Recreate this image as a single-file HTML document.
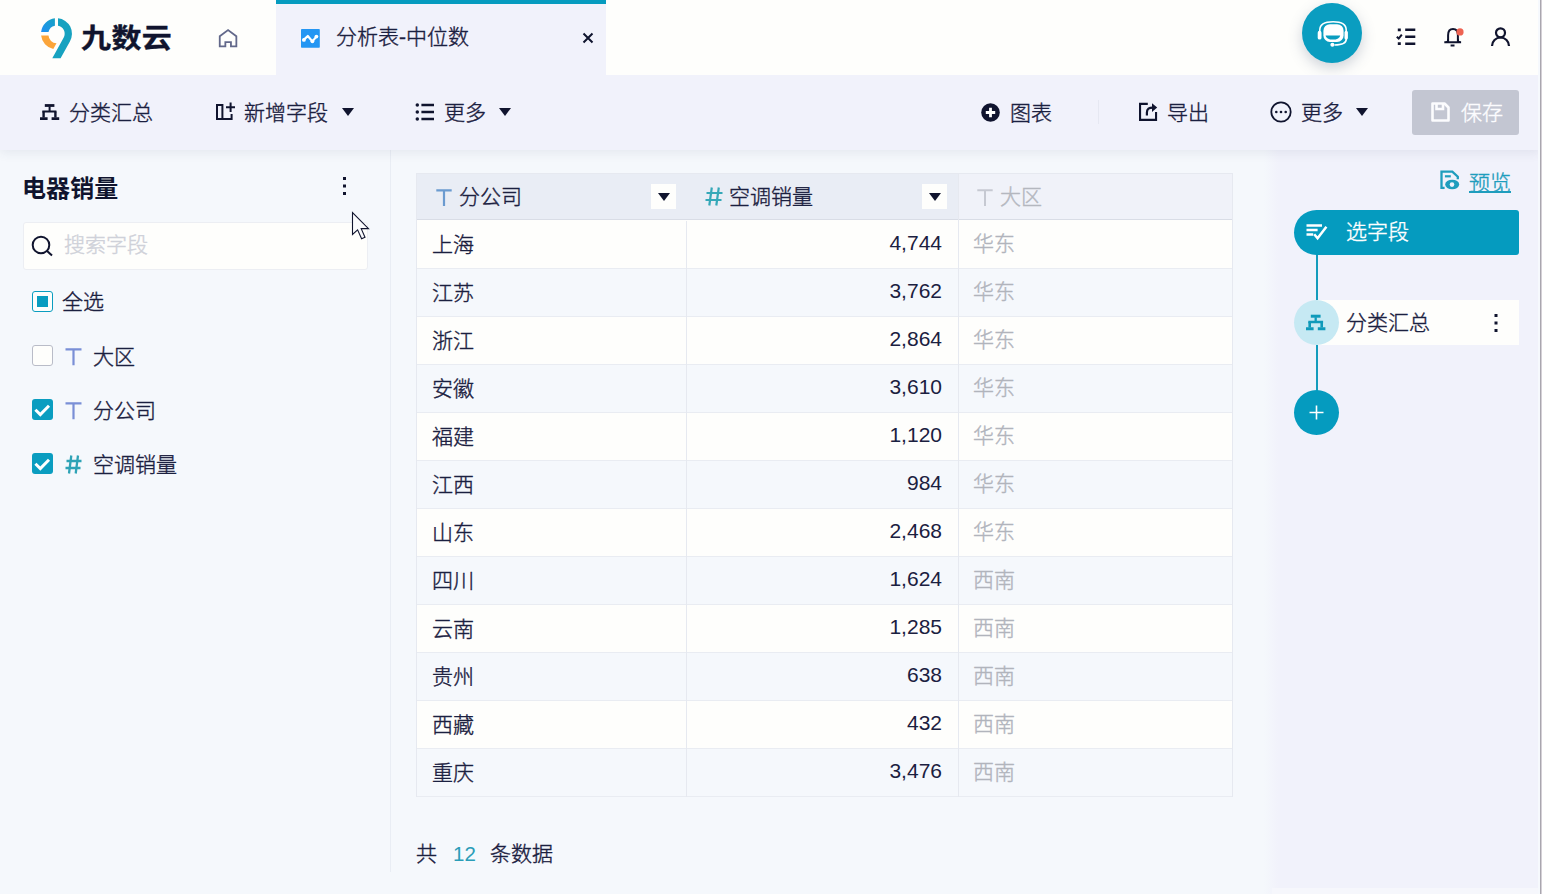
<!DOCTYPE html>
<html lang="zh-CN">
<head>
<meta charset="utf-8">
<title>分析表-中位数</title>
<style>
*{box-sizing:border-box;margin:0;padding:0}
html,body{width:1542px;height:894px;overflow:hidden}
body{position:relative;background:#f5f8fc;font-family:"Liberation Sans","Noto Sans CJK SC",sans-serif;font-size:21px;color:#1a1f3d;}
.abs{position:absolute}
.t{font-weight:300;-webkit-text-stroke:0.4px currentColor;position:absolute;white-space:nowrap;line-height:30px;height:30px;font-size:21px;color:#1b2040}
svg{position:absolute;overflow:visible}

/* top bar */
#top{left:0;top:0;width:1540px;height:75px;background:#fefefc}
#tab{left:276px;top:0;width:330px;height:75px;background:#f1f2fb;border-top:4px solid #059bbf}
/* toolbar */
#bar{left:0;top:75px;width:1540px;height:75px;background:#f1f2fb;box-shadow:0 3px 10px rgba(60,70,110,.085);clip-path:inset(0 0 -20px 0);z-index:5}
#save{left:1412px;top:90px;width:107px;height:45px;background:#c3c6d2;border-radius:3px}
/* panels */
#left{left:0;top:150px;width:391px;height:722px;background:#f5f8fc;border-right:1px solid #e9edf4}
#right{left:1264px;top:150px;width:276px;height:744px;background:linear-gradient(to right,rgba(241,242,251,0) 0,#f1f2fb 14px,#f1f2fb 100%)}
#edge{left:1538px;top:0;width:4px;height:894px;background:linear-gradient(to right,#f6f9fd 0,#f6f9fd 2px,#a9a6af 2px,#a9a6af 3px,#d4d0d6 3px,#d4d0d6 4px);z-index:30}
#search{left:23px;top:222px;width:345px;height:48px;background:#fefefc;border:1px solid #eceef3;border-radius:3px}
.cb{position:absolute;width:21px;height:21px;border-radius:3px}
.cb.on{background:#0a9dc0}
.cb.off{background:#fefefc;border:1.5px solid #b9bcc8}
.cb.half{background:#fefefc;border:1.5px solid #0a9dc0}
.cb.half:after{content:"";position:absolute;left:3.5px;top:3.5px;width:11px;height:11px;background:#0a9dc0}

/* table */
#tbl{left:416px;top:173px;width:817px;height:624px;border:1px solid #e6e9f0;background:#fefefc}
#th{left:417px;top:174px;width:815px;height:46px;background:#e9edf5;border-bottom:1px solid #d9dde6}
.row{position:absolute;left:417px;width:815px;height:48px;border-bottom:1px solid #e9ecf2}
.row.odd{background:#fefefc}
.row.even{background:#f5f8fc}
.row span{font-weight:300;-webkit-text-stroke:0.4px currentColor;position:absolute;top:9px;line-height:30px;font-size:21px;white-space:nowrap}
.row .c1{left:15px;color:#1b2040}
.row .c2{right:290px;top:7px;font-weight:400;-webkit-text-stroke:0;color:#1b2040;font-size:21px}
.row .c3{left:556px;top:8px;color:#b1b4bc}
.vl{position:absolute;width:1px;background:#e6e9f0;top:173px;height:624px}
.dd{position:absolute;width:25px;height:25px;background:#fefefc}
.dd:after{content:"";position:absolute;left:6.5px;top:8.5px;border-left:6px solid transparent;border-right:6px solid transparent;border-top:8px solid #10142e}
.caret{position:absolute;width:0;height:0;border-left:6px solid transparent;border-right:6px solid transparent;border-top:8px solid #10142e}
</style>
</head>
<body>
<div id="top" class="abs"></div>
<div id="tab" class="abs"></div>
<div id="bar" class="abs"></div>
<div id="left" class="abs"></div>
<div id="right" class="abs"></div>
<div id="edge" class="abs"></div>
<div class="abs" style="left:1272px;top:888px;width:268px;height:6px;background:#f6f7fc"></div>

<!-- LOGO -->
<svg style="left:36px;top:14px" width="40" height="48" viewBox="0 0 40 48">
  <defs><linearGradient id="lg1" x1="0" y1="1" x2="1" y2="0"><stop offset="0" stop-color="#1e8ff5"/><stop offset="0.550" stop-color="#1b9ad8"/><stop offset="1" stop-color="#17a2c2"/></linearGradient></defs>
  <path d="M18.900 4.280 A15.500 15.500 0 0 0 5.100 17.900 L12.500 17.900 A8.200 8.200 0 0 1 18.900 11.660 Z" fill="url(#lg1)"/>
  <path d="M5.100 21.500 A15.500 15.500 0 0 0 17.300 35 L20.500 29.300 A8.400 8.400 0 0 1 12.500 21.500 Z" fill="#fba53a"/>
  <path d="M22 4.280 A15.500 15.500 0 0 1 33.900 27.450 L24.600 44.300 H16.300 L27.600 23.800 A8.200 8.200 0 0 0 22 11.660 Z" fill="#17a2c0"/>
</svg>
<div class="t" style="left:81px;top:20px;font-size:30px;line-height:36px;height:36px;font-weight:700;color:#10142e;letter-spacing:0.400px;-webkit-text-stroke:0.400px #10142e;transform:scaleY(0.920);transform-origin:50% 88%">九数云</div>
<svg style="left:217px;top:27px" width="22" height="22" viewBox="0 0 22 22" fill="none" stroke="#62688a" stroke-width="1.800">
  <path d="M2.750 9.300 L11.050 3.100 L19.350 9.300 V19.350 H13.950 V15.100 H8.350 V19.350 H2.750 Z" stroke-linejoin="miter"/>
</svg>
<svg style="left:301px;top:28.700px" width="19" height="19" viewBox="0 0 19 19">
  <rect width="18.800" height="18.800" rx="0.800" fill="#2496f3"/>
  <path d="M2.700 10.900 L6.800 7 L11.400 12.400 L15.400 7.600" fill="none" stroke="#fff" stroke-width="2.200" stroke-linecap="round" stroke-linejoin="round"/>
  <circle cx="2.900" cy="10.900" r="1.900" fill="#fff"/><circle cx="11.400" cy="12.300" r="1.900" fill="#fff"/><circle cx="15.400" cy="7.600" r="1.900" fill="#fff"/>
</svg>
<div class="t" style="left:336px;top:22px">分析表-中位数</div>
<svg style="left:582px;top:32px" width="12" height="12" viewBox="0 0 12 12" stroke="#10142e" stroke-width="2" fill="none"><path d="M1.5 1.5 L10.5 10.5 M10.5 1.5 L1.5 10.5"/></svg>

<div class="abs" style="left:1302px;top:3px;width:60px;height:60px;border-radius:50%;background:#0a9dc0;box-shadow:0 5px 14px rgba(70,85,120,.26)"></div>
<svg style="left:1302px;top:3px" width="60" height="60" viewBox="0 0 60 60" fill="none" stroke="#fff" stroke-width="1.600">
  <path d="M17.800 30 V27 C17.800 21.500 22.500 18.800 31.200 18.800 C39.900 18.800 44.200 21.500 44.200 27 V30"/>
  <rect x="21.400" y="21.200" width="20.200" height="17.800" rx="6.500" fill="#fff" stroke="none"/>
  <path d="M23.600 32.600 H38.200 A7.300 4 0 0 1 23.600 32.600Z" fill="#0a9dc0" stroke="none"/>
  <rect x="15.700" y="27.800" width="3.800" height="8.800" rx="1.900" fill="#fff" stroke="none"/>
  <rect x="42.500" y="27.800" width="3.400" height="8.800" rx="1.700" fill="#fff" stroke="none"/>
  <path d="M44.300 36 C44.300 40.800 38.500 42 32.500 42" stroke-width="1.600"/>
  <circle cx="30.400" cy="41.700" r="2.050" fill="#fff" stroke="none"/>
</svg>

<svg style="left:1396px;top:27px" width="22" height="22" viewBox="0 0 22 22" fill="none" stroke="#10142e" stroke-width="2.600">
  <path d="M9.200 2.800 H19.300 M9.200 9.800 H19.300 M9.200 16.700 H19.300"/>
  <path d="M1.800 2.800 H4.800 M1.800 16.700 H4.800" stroke-width="2.800"/>
  <path d="M0.800 9.800 L2.700 11.600 L5.800 7.600" stroke-width="2"/>
</svg>
<svg style="left:1442px;top:26px" width="24" height="24" viewBox="0 0 24 24" fill="none" stroke="#10142e" stroke-width="2">
  <path d="M2.300 16.300 H19.100 M6.100 16.300 V9.200 C6.100 5.500 8 3 11 3 C14 3 15.900 5.500 15.900 9.200 V16.300 M8.600 19.500 H12.500"/>
  <path d="M6.100 13 C6.100 14.500 5 16.300 3.500 16.300 M15.900 13 C15.900 14.500 17 16.300 18.500 16.300" stroke-width="1.600"/>
  <circle cx="18" cy="5.900" r="3.600" fill="#ee6352" stroke="none"/>
</svg>
<svg style="left:1490px;top:26px" width="22" height="22" viewBox="0 0 22 22" fill="none" stroke="#10142e" stroke-width="2.200">
  <circle cx="10.500" cy="6.800" r="4.500"/>
  <path d="M2 20 A8.500 8.500 0 0 1 19 20"/>
</svg>
<!-- TOOLBAR -->
<div class="abs" style="left:0;top:0;z-index:6">
<svg style="left:40px;top:103px" width="20" height="18" viewBox="0 0 20 18" fill="none" stroke="#10142e">
  <path d="M4.800 2.500 H14.400" stroke-width="2.800"/>
  <path d="M9.600 3.500 V8.600 M2.300 8.600 H16.400" stroke-width="2"/>
  <path d="M3.600 8.600 V14.500 M15.400 8.600 V14.500" stroke-width="2.400"/>
  <path d="M0 15.600 H7.600 M11.600 15.600 H19.200" stroke-width="2.800"/>
</svg>
<div class="t" style="left:69px;top:98px">分类汇总</div>

<svg style="left:215px;top:102px" width="22" height="20" viewBox="0 0 22 20" fill="none" stroke="#10142e" stroke-width="2">
  <rect x="2" y="3" width="5.400" height="14"/>
  <path d="M7 17 H16.600 V12"/>
  <path d="M11 5.200 H20 M15.600 0.600 V10"/>
</svg>
<div class="t" style="left:244px;top:98px">新增字段</div>
<div class="caret" style="left:342px;top:108px"></div>

<svg style="left:415px;top:103px" width="19" height="18" viewBox="0 0 19 18" fill="none" stroke="#10142e" stroke-width="2.400">
  <path d="M6.400 2 H19 M6.400 9 H19 M6.400 16 H19"/>
  <g fill="#10142e" stroke="none"><circle cx="2.300" cy="2" r="1.750"/><circle cx="2.300" cy="9" r="1.750"/><circle cx="2.300" cy="16" r="1.750"/></g>
</svg>
<div class="t" style="left:444px;top:98px">更多</div>
<div class="caret" style="left:499px;top:108px"></div>

<svg style="left:981px;top:103px" width="19" height="19" viewBox="0 0 19 19">
  <circle cx="9.500" cy="9.500" r="9.300" fill="#10142e"/>
  <path d="M9.500 4.800 V14.200 M4.800 9.500 H14.200" stroke="#fff" stroke-width="2.800" fill="none"/>
</svg>
<div class="t" style="left:1010px;top:98px">图表</div>
<div class="abs" style="left:1098px;top:100px;width:1px;height:24px;background:#e6e8f2"></div>

<svg style="left:1139px;top:102px" width="20" height="20" viewBox="0 0 20 20" fill="none" stroke="#10142e" stroke-width="2.100">
  <path d="M8.800 1.900 H1.050 V17.850 H17.050 V10"/>
  <path d="M7.900 13.400 V10.500 C7.900 7 10 5.600 14 5.600" stroke-width="2.200"/>
  <path d="M13 1.200 L18.200 5.600 L13 10 Z" fill="#10142e" stroke="none"/>
</svg>
<div class="t" style="left:1167px;top:98px">导出</div>

<svg style="left:1270px;top:101px" width="22" height="22" viewBox="0 0 22 22">
  <circle cx="11" cy="11" r="9.700" fill="none" stroke="#10142e" stroke-width="1.800"/>
  <circle cx="6.300" cy="11" r="1.300" fill="#10142e"/><circle cx="11" cy="11" r="1.300" fill="#10142e"/><circle cx="15.700" cy="11" r="1.300" fill="#10142e"/>
</svg>
<div class="t" style="left:1301px;top:98px">更多</div>
<div class="caret" style="left:1356px;top:108px"></div>

<div id="save" class="abs"></div>
<svg style="left:1431px;top:102px" width="19" height="20" viewBox="0 0 19 20" fill="none" stroke="#fcfcfe" stroke-width="2.600">
  <path d="M1.500 1.500 H13.500 L17.500 5.500 V18.500 H1.500 Z" stroke-linejoin="round"/>
  <path d="M5.500 1.500 V7 H12 V1.500" />
</svg>
<div class="t" style="left:1461px;top:98px;color:#fcfcfe">保存</div>
</div>
<!-- LEFTPANEL -->
<div class="t" style="left:22px;top:173px;font-size:24px;font-weight:700;-webkit-text-stroke:0;line-height:32px;height:32px;color:#10142e;letter-spacing:0.100px">电器销量</div>
<svg style="left:343px;top:177px" width="3" height="18" viewBox="0 0 3 18" fill="#10142e"><rect x="0" y="0" width="3" height="3"/><rect x="0" y="7.500" width="3" height="3"/><rect x="0" y="15" width="3" height="3"/></svg>
<div id="search" class="abs"></div>
<svg style="left:31px;top:235px" width="22" height="22" viewBox="0 0 22 22" fill="none" stroke="#10142e" stroke-width="2"><circle cx="10" cy="10" r="8.300"/><path d="M15.800 15.800 L21 20.600"/></svg>
<div class="t" style="left:64px;top:230px;color:#cfd1d9">搜索字段</div>

<div class="cb half" style="left:32px;top:291px"></div>
<div class="t" style="left:62px;top:287px">全选</div>

<div class="cb off" style="left:32px;top:345px"></div>
<svg style="left:65px;top:348px" width="17" height="18" viewBox="0 0 17 18" fill="none" stroke="#7a8fd6" stroke-width="2.200"><path d="M0.500 1.300 H16.500 M8.500 1.300 V17.300"/></svg>
<div class="t" style="left:93px;top:342px">大区</div>

<div class="cb on" style="left:32px;top:399px"></div>
<svg style="left:32px;top:399px" width="21" height="21" viewBox="0 0 21 21" fill="none" stroke="#fff" stroke-width="3"><path d="M3.400 10.800 L8.300 15.600 L17 6.800"/></svg>
<svg style="left:65px;top:402px" width="17" height="18" viewBox="0 0 17 18" fill="none" stroke="#7a8fd6" stroke-width="2.200"><path d="M0.500 1.300 H16.500 M8.500 1.300 V17.300"/></svg>
<div class="t" style="left:93px;top:396px">分公司</div>

<div class="cb on" style="left:32px;top:453px"></div>
<svg style="left:32px;top:453px" width="21" height="21" viewBox="0 0 21 21" fill="none" stroke="#fff" stroke-width="3"><path d="M3.400 10.800 L8.300 15.600 L17 6.800"/></svg>
<svg style="left:65px;top:455px" width="17" height="19" viewBox="0 0 17 19" fill="none" stroke="#2fa3b6" stroke-width="2.300"><path d="M6.300 0.500 L4 18.500 M13 0.500 L10.700 18.500 M1.500 6 H16.500 M0.500 13 H15.500"/></svg>
<div class="t" style="left:93px;top:450px">空调销量</div>

<svg style="left:351px;top:211px;z-index:20" width="20" height="30" viewBox="0 0 20 30"><path d="M1.500 1.500 V23.500 L6.600 18.800 L10.600 27.800 L14 26.300 L10.200 17.600 H17.500 Z" fill="#fafbfd" stroke="#10142e" stroke-width="1.100" stroke-linejoin="miter"/></svg>
<!-- TABLE -->
<div id="tbl" class="abs"></div>
<div id="th" class="abs"></div>
<div class="abs" style="left:959px;top:174px;width:273px;height:45px;background:#f0f2f9"></div>
<div class="row odd" style="top:221px"><span class="c1">上海</span><span class="c2">4,744</span><span class="c3">华东</span></div>
<div class="row even" style="top:269px"><span class="c1">江苏</span><span class="c2">3,762</span><span class="c3">华东</span></div>
<div class="row odd" style="top:317px"><span class="c1">浙江</span><span class="c2">2,864</span><span class="c3">华东</span></div>
<div class="row even" style="top:365px"><span class="c1">安徽</span><span class="c2">3,610</span><span class="c3">华东</span></div>
<div class="row odd" style="top:413px"><span class="c1">福建</span><span class="c2">1,120</span><span class="c3">华东</span></div>
<div class="row even" style="top:461px"><span class="c1">江西</span><span class="c2">984</span><span class="c3">华东</span></div>
<div class="row odd" style="top:509px"><span class="c1">山东</span><span class="c2">2,468</span><span class="c3">华东</span></div>
<div class="row even" style="top:557px"><span class="c1">四川</span><span class="c2">1,624</span><span class="c3">西南</span></div>
<div class="row odd" style="top:605px"><span class="c1">云南</span><span class="c2">1,285</span><span class="c3">西南</span></div>
<div class="row even" style="top:653px"><span class="c1">贵州</span><span class="c2">638</span><span class="c3">西南</span></div>
<div class="row odd" style="top:701px"><span class="c1">西藏</span><span class="c2">432</span><span class="c3">西南</span></div>
<div class="row even" style="top:749px"><span class="c1">重庆</span><span class="c2">3,476</span><span class="c3">西南</span></div>
<div class="vl" style="left:686px;top:221px;height:576px"></div>
<div class="vl" style="left:958px"></div>
<svg style="left:436px;top:188px" width="16" height="18" viewBox="0 0 16 18" fill="none" stroke="#6b9bd0" stroke-width="2.200"><path d="M0.300 2.300 H15.700 M8 2.300 V18"/></svg>
<div class="t" style="left:459px;top:182px">分公司</div>
<div class="dd" style="left:651px;top:184px"></div>
<svg style="left:705px;top:187px" width="18" height="19" viewBox="0 0 18 19" fill="none" stroke="#35a8b8" stroke-width="2.200"><path d="M6.800 0.500 L4.300 18.500 M13.800 0.500 L11.300 18.500 M1.500 6 H17.500 M0.500 13 H16.500"/></svg>
<div class="t" style="left:729px;top:182px">空调销量</div>
<div class="dd" style="left:922px;top:184px"></div>
<svg style="left:977px;top:188px" width="16" height="18" viewBox="0 0 16 18" fill="none" stroke="#c6c9d2" stroke-width="2"><path d="M0.300 2.300 H15.700 M8 2.300 V18"/></svg>
<div class="t" style="left:1000px;top:182px;color:#b4b7bf">大区</div>

<div class="t" style="left:416px;top:839px">共</div>
<div class="t" style="left:453px;top:839px;color:#2a9db8;font-size:20.500px;font-weight:400;-webkit-text-stroke:0">12</div>
<div class="t" style="left:490px;top:839px">条数据</div>
<!-- RIGHTPANEL -->
<svg style="left:1440px;top:170px" width="20" height="20" viewBox="0 0 20 20" fill="none" stroke="#1f9dbd" stroke-width="2.300">
  <path d="M1.500 19 V1.600 H12.300 L17.800 6.700 V9.300"/>
  <path d="M4.900 6.300 H10.800" stroke-width="2.200"/>
  <path d="M1.500 17.900 H4.600"/>
  <ellipse cx="12.200" cy="14.500" rx="7" ry="4.800" fill="#1f9dbd" stroke="none"/>
  <circle cx="12" cy="14.600" r="2.300" fill="#f1f2fb" stroke="none"/>
</svg>
<div class="t" style="left:1469px;top:168px;color:#1f9dbd;text-decoration:underline;text-underline-offset:1px;text-decoration-thickness:1.600px">预览</div>

<div class="abs" style="left:1316px;top:250px;width:2px;height:145px;background:#149cbc"></div>
<div class="abs" style="left:1294px;top:210px;width:225px;height:45px;background:#059bbf;border-radius:22.500px 3px 3px 22.500px"></div>
<svg style="left:1306px;top:224px" width="21" height="16" viewBox="0 0 21 16" fill="none" stroke="#fff" stroke-width="2.200">
  <path d="M0.500 1.600 H16 M0.500 6 H11.600 M0.500 10.400 H7.200" stroke-width="2.500"/>
  <path d="M8.200 10.200 L11.600 14.200 L20.400 2.800" stroke-width="2.500"/>
</svg>
<div class="t" style="left:1346px;top:217px;color:#fff">选字段</div>

<div class="abs" style="left:1316px;top:300px;width:203px;height:45px;background:#fefefc"></div>
<div class="abs" style="left:1294px;top:300px;width:45px;height:45px;border-radius:50%;background:#c6e9f3"></div>
<svg style="left:1306px;top:314px" width="20" height="17" viewBox="0 0 20 17" fill="none" stroke="#0f9aba">
  <path d="M4.800 2.200 H14.600" stroke-width="3"/>
  <path d="M9.700 3.300 V8 M2.300 8 H17.100" stroke-width="2.300"/>
  <path d="M3.700 8 V13.500 M15.700 8 V13.500" stroke-width="2.600"/>
  <path d="M0 14.700 H7.600 M11.800 14.700 H19.400" stroke-width="3"/>
</svg>
<div class="t" style="left:1346px;top:308px">分类汇总</div>
<svg style="left:1494px;top:314px" width="4" height="18" viewBox="0 0 4 18" fill="#10142e"><rect x="0.500" y="0" width="3" height="3"/><rect x="0.500" y="7.500" width="3" height="3"/><rect x="0.500" y="15" width="3" height="3"/></svg>

<div class="abs" style="left:1294px;top:390px;width:45px;height:45px;border-radius:50%;background:#059bbf"></div>
<svg style="left:1309px;top:405px" width="15" height="15" viewBox="0 0 15 15" fill="none" stroke="#fff" stroke-width="1.600"><path d="M7.500 0.500 V14.500 M0.500 7.500 H14.500"/></svg>
</body>
</html>
